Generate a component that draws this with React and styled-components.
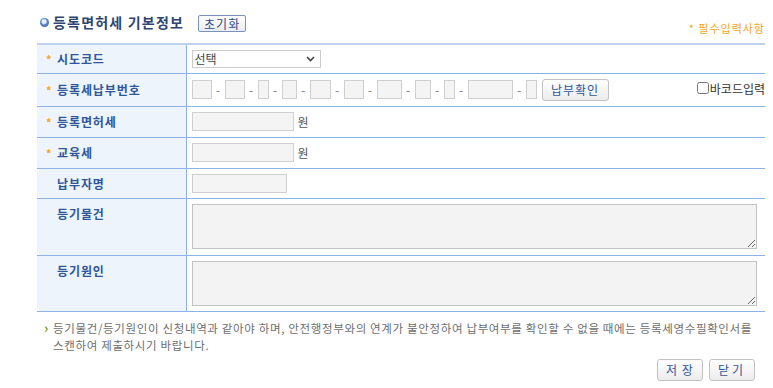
import React from "react";
import styled, { createGlobalStyle } from "styled-components";

const Global = createGlobalStyle`
  html, body { margin: 0; padding: 0; background: #fff; }
  body { font-family: "Noto Sans CJK KR", "Noto Sans", sans-serif; font-size: 12px; color: #333; }
`;

const Page = styled.div`
  width: 728px;
  padding: 0 8px 0 37px;
`;

const Header = styled.div`
  display: flex;
  align-items: center;
  height: 43px;
  padding-top: 1px;
  box-sizing: border-box;
`;

const Bullet = styled.span`
  width: 9px;
  height: 9px;
  border-radius: 50%;
  margin: 0 4px 0 3px;
  background: radial-gradient(circle at 45% 40%, #e6eefb 0 25%, #5b86c9 45%, #284f95 100%);
`;

const Title = styled.h2`
  margin: 0;
  font-size: 14px;
  font-weight: bold;
  color: #2d4570;
  letter-spacing: 1.2px;
`;

const SmallBtn = styled.button`
  font-family: inherit;
  font-size: 12px;
  color: #2d4a80;
  height: 17px;
  width: 48px;
  padding: 0;
  margin-left: 14px;
  margin-top: 2px;
  line-height: 13px;
  letter-spacing: 1px;
  border: 1px solid #7b93b8;
  border-radius: 2px;
  background: linear-gradient(#ffffff, #e9edf3);
`;

const Required = styled.span`
  margin-left: auto;
  align-self: flex-end;
  margin-bottom: 7px;
  font-size: 11px;
  letter-spacing: 1px;
  color: #f5a623;
`;

const Table = styled.table`
  width: 728px;
  border-collapse: collapse;
  border-top: 2px solid #bcd2f0;
  border-bottom: 1px solid #8eb2e6;
`;

const Row = styled.tr`
  height: ${(p) => p.$h}px;
  border-top: 1px solid #8eb2e6;
`;

const Th = styled.th`
  width: 149px;
  box-sizing: border-box;
  background: #eef4fc;
  border-right: 1px solid #8eb2e6;
  text-align: left;
  vertical-align: ${(p) => (p.$top ? "top" : "middle")};
  padding: ${(p) => (p.$top ? "6px" : "0")} 0 0 9px;
  font-size: 12px;
  font-weight: bold;
  letter-spacing: 0.9px;
  color: #2f569a;
  white-space: nowrap;
`;

const Star = styled.span`
  display: inline-block;
  width: 11px;
  color: #f5a623;
  font-weight: bold;
  font-size: 11px;
`;

const Td = styled.td`
  padding: ${(p) => (p.$top ? "5px" : "0")} 0 0 5px;
  vertical-align: ${(p) => (p.$top ? "top" : "middle")};
`;

const Line = styled.div`
  display: flex;
  align-items: center;
  gap: 4px;
`;

const Box = styled.input`
  box-sizing: border-box;
  width: ${(p) => p.$w}px;
  height: 19px;
  margin: 0;
  padding: 0 3px;
  border: 1px solid #cfcfcf;
  background: #f4f4f4;
  font-family: inherit;
  font-size: 12px;
`;

const Dash = styled.span`
  width: 5px;
  text-align: center;
  color: #777;
  font-size: 12px;
`;

const SelectBox = styled.div`
  box-sizing: border-box;
  width: 129px;
  height: 18px;
  display: flex;
  align-items: center;
  justify-content: space-between;
  padding: 0 5px 0 2px;
  border: 1px solid #cdcdcd;
  background: #fff;
  color: #444;
  font-size: 12px;
`;

const Btn = styled.button`
  font-family: inherit;
  font-size: 12px;
  color: #2f569a;
  height: 22px;
  width: ${(p) => p.$w}px;
  padding: 0;
  letter-spacing: ${(p) => p.$ls || 0}px;
  border: 1px solid #c2c2c2;
  border-radius: 3px;
  background: linear-gradient(#ffffff, #ececec);
`;

const BarcodeLabel = styled.label`
  margin-left: auto;
  align-self: flex-start;
  margin-top: 1px;
  display: flex;
  align-items: center;
  font-size: 12px;
  color: #333;
`;

const Check = styled.input`
  margin: 0 1px 0 0;
  width: 12px;
  height: 12px;
`;

const Won = styled.span`
  color: #555;
  font-size: 12px;
`;

const Area = styled.textarea`
  box-sizing: border-box;
  display: block;
  width: 565px;
  height: 45px;
  margin: 0;
  border: 1px solid #c3c3c3;
  background: #f3f3f3;
`;

const Note = styled.div`
  display: flex;
  margin: 8px 0 0 7px;
  font-size: 11.5px;
  letter-spacing: 0.65px;
  line-height: 17px;
  color: #6e6e6e;
`;

const Arrow = styled.span`
  width: 9px;
  flex: none;
  color: #6f9a12;
  font-weight: bold;
  font-size: 13px;
  line-height: 16px;
`;

const Footer = styled.div`
  display: flex;
  justify-content: flex-end;
  gap: 6px;
  margin-top: 5px;
  padding-right: 10px;
`;

const boxes = [20, 20, 11, 15, 21, 20, 25, 16, 11, 45, 11];

export default function App() {
  return (
    <Page>
      <Global />
      <Header>
        <Bullet />
        <Title>등록면허세 기본정보</Title>
        <SmallBtn>초기화</SmallBtn>
        <Required>* 필수입력사항</Required>
      </Header>
      <Table>
        <tbody>
          <Row $h={29}>
            <Th><Star>*</Star>시도코드</Th>
            <Td>
              <SelectBox>
                <span>선택</span>
                <svg width="9" height="6" viewBox="0 0 9 6">
                  <path d="M1 1l3.5 3.5L8 1" fill="none" stroke="#444" strokeWidth="1.6" />
                </svg>
              </SelectBox>
            </Td>
          </Row>
          <Row $h={33}>
            <Th><Star>*</Star>등록세납부번호</Th>
            <Td>
              <Line>
                {boxes.map((w, i) => (
                  <React.Fragment key={i}>
                    {i > 0 && <Dash>-</Dash>}
                    <Box $w={w} />
                  </React.Fragment>
                ))}
                <Btn $w={67} $ls={1} style={{ marginLeft: 1 }}>납부확인</Btn>
                <BarcodeLabel>
                  <Check type="checkbox" />
                  바코드입력
                </BarcodeLabel>
              </Line>
            </Td>
          </Row>
          <Row $h={31}>
            <Th><Star>*</Star>등록면허세</Th>
            <Td>
              <Line>
                <Box $w={102} />
                <Won>원</Won>
              </Line>
            </Td>
          </Row>
          <Row $h={31}>
            <Th><Star>*</Star>교육세</Th>
            <Td>
              <Line>
                <Box $w={102} />
                <Won>원</Won>
              </Line>
            </Td>
          </Row>
          <Row $h={30}>
            <Th><Star />납부자명</Th>
            <Td>
              <Box $w={95} />
            </Td>
          </Row>
          <Row $h={57}>
            <Th $top><Star />등기물건</Th>
            <Td $top>
              <Area />
            </Td>
          </Row>
          <Row $h={56}>
            <Th $top><Star />등기원인</Th>
            <Td $top>
              <Area />
            </Td>
          </Row>
        </tbody>
      </Table>
      <Note>
        <Arrow>›</Arrow>
        <span>
          등기물건/등기원인이 신청내역과 같아야 하며, 안전행정부와의 연계가 불안정하여 납부여부를 확인할 수 없을 때에는 등록세영수필확인서를
          <br />
          스캔하여 제출하시기 바랍니다.
        </span>
      </Note>
      <Footer>
        <Btn $w={46} $ls={1}>저 장</Btn>
        <Btn $w={46} $ls={3}>닫기</Btn>
      </Footer>
    </Page>
  );
}
